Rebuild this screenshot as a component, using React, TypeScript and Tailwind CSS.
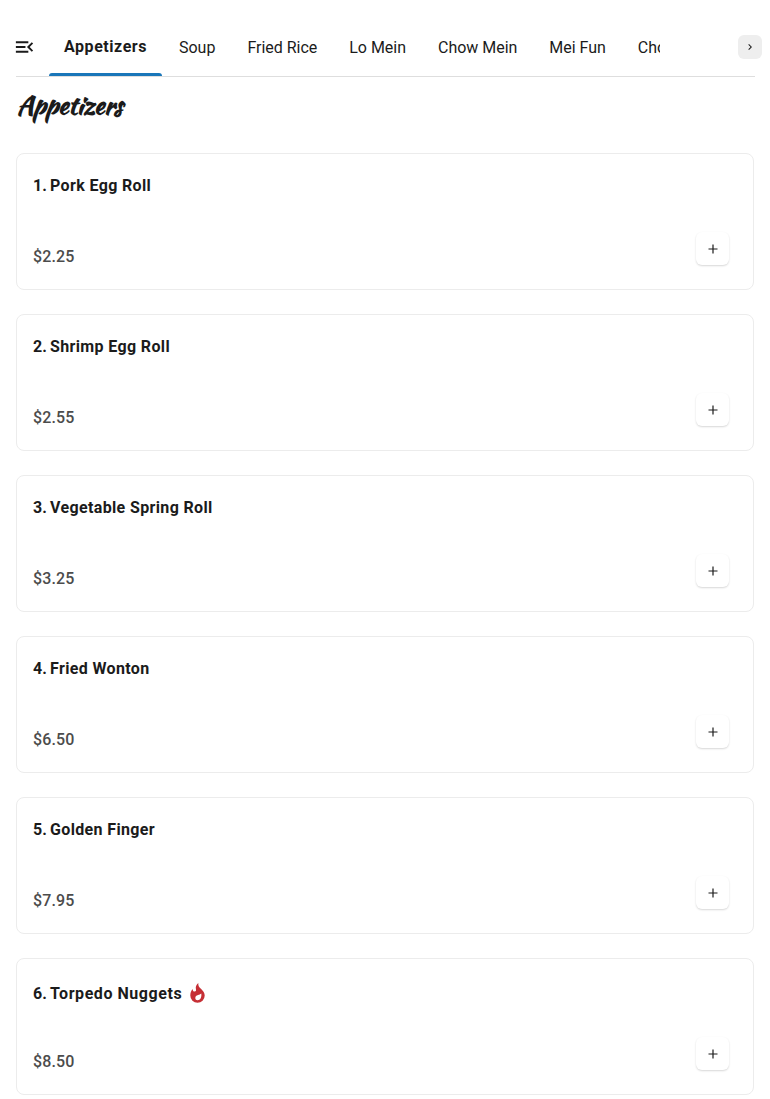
import clsx from "clsx";
import { MdChevronRight, MdMenuOpen } from "react-icons/md";

const categories = [
  "Appetizers",
  "Soup",
  "Fried Rice",
  "Lo Mein",
  "Chow Mein",
  "Mei Fun",
  "Cho",
];

const items = [
  { id: 1, name: "Pork Egg Roll", price: 2.25 },
  { id: 2, name: "Shrimp Egg Roll", price: 2.55 },
  { id: 3, name: "Vegetable Spring Roll", price: 3.25 },
  { id: 4, name: "Fried Wonton", price: 6.5 },
  { id: 5, name: "Golden Finger", price: 7.95 },
  { id: 6, name: "Torpedo Nuggets", price: 8.5, spicy: true },
];

type Item = (typeof items)[number];

export default function App() {
  return (
    <div className="h-[1099px] overflow-hidden bg-white font-['Roboto',sans-serif] text-[#1b1b1b]">
      <CategoryNav />
      <main className="px-4">
        <h1 className="mt-2.5 ml-px h-[36px] w-fit whitespace-nowrap font-['Kaushan_Script',cursive] text-[26px] font-bold leading-[36px] tracking-[-0.4px]">
          Appetizers
        </h1>
        <div className="mt-[30px] flex flex-col gap-6">
          {items.map((item) => (
            <MenuCard key={item.id} item={item} />
          ))}
        </div>
      </main>
    </div>
  );
}

const CategoryNav = () => (
  <nav className="mr-[15px] ml-4 flex h-[77px] items-end border-b border-[#dedede]">
    <button className="-ml-[3px] mb-[17px] shrink-0" aria-label="All categories">
      <MdMenuOpen className="h-6 w-[23px]" />
    </button>
    <div className="ml-3 flex w-[612px] overflow-hidden">
      {categories.map((category, i) => (
        <button
          key={category}
          className={clsx(
            "relative h-[59px] shrink-0 whitespace-nowrap px-4 text-base",
            i === 0 ? "font-bold tracking-[0.55px]" : "pt-0.5 tracking-[-0.02px]",
          )}
        >
          {category}
          {i === 0 && (
            <span className="absolute inset-x-px bottom-0 h-[3px] rounded-t-[3px] bg-[#1976b9]" />
          )}
        </button>
      ))}
    </div>
    <button
      className="-mr-[7px] mb-[17px] ml-auto flex size-6 shrink-0 items-center justify-center rounded-md bg-[#eeeeee]"
      aria-label="Next"
    >
      <MdChevronRight className="size-3" />
    </button>
  </nav>
);

const MenuCard = ({ item }: { item: Item }) => (
  <div className="flex h-[137px] w-[738px] justify-between rounded-lg border border-[#ececec] pr-6 pb-6 pl-4">
    <div className="flex flex-col justify-between">
      <h3
        className={clsx(
          "flex items-center text-base font-bold",
          item.spicy ? "mt-[23px]" : "mt-5",
        )}
      >
        <span className="w-[17px]">{item.id}.</span>
        <span className={item.spicy ? "tracking-[0.55px]" : "tracking-[0.36px]"}>
          {item.name}
        </span>
        {item.spicy && <FlameIcon />}
      </h3>
      <p className="-mb-1 text-base font-medium tracking-[0.1px] text-[#4c4c4c]">
        ${item.price.toFixed(2)}
      </p>
    </div>
    <button
      className="flex size-[33px] items-center justify-center self-end rounded-md bg-white shadow-[0_1px_2px_rgba(0,0,0,0.16)]"
      aria-label={`Add ${item.name}`}
    >
      <svg viewBox="0 0 10 10" className="size-2.5" stroke="currentColor" strokeWidth="1.2">
        <path d="M5 .5v9M.5 5h9" />
      </svg>
    </button>
  </div>
);

const FlameIcon = () => (
  <svg
    viewBox="0 0 15 20"
    className="-mt-[3px] ml-2 h-5 w-[15px]"
    fill="#c62f35"
    fillRule="evenodd"
  >
    <path d="M8.300 0c-.2 2.700.6 4 2.600 5.800C13.300 8 14.700 10 14.700 12.600a7.200 7.200 0 0 1-14.400 0C.3 10 1 8 2.600 6c.1 1.600.8 2.600 2 2.600C6.200 8.600 6.200 7.300 5.900 6 5.300 3.700 6.500 1.500 8.300 0ZM11.300 10.600c-1 .9-2.100 1.200-3.200 1.500-1.800.5-2.800 1.400-2.800 2.900 0 1.300 1 2.300 2.300 2.300 2.500 0 4.200-2.600 3.700-6.700Z" />
  </svg>
);
